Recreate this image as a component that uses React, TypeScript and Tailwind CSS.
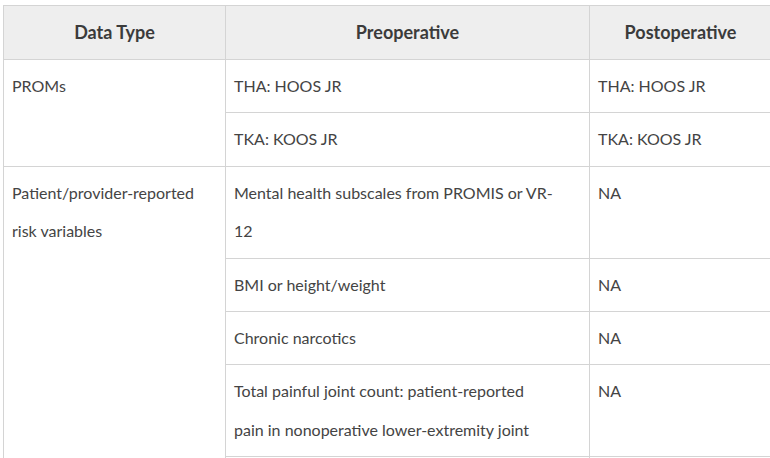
import * as React from "react";

type Row = { type?: React.ReactNode; span?: number; pre: React.ReactNode; post: string };

const rows: Row[] = [
  { type: "PROMs", span: 2, pre: "THA: HOOS JR", post: "THA: HOOS JR" },
  { pre: "TKA: KOOS JR", post: "TKA: KOOS JR" },
  {
    type: (
      <>
        Patient/provider-reported
        <br />
        risk variables
      </>
    ),
    span: 5,
    pre: (
      <>
        Mental health subscales from PROMIS or VR-
        <br />
        12
      </>
    ),
    post: "NA",
  },
  { pre: "BMI or height/weight", post: "NA" },
  { pre: "Chronic narcotics", post: "NA" },
  {
    pre: (
      <>
        Total painful joint count: patient-reported
        <br />
        pain in nonoperative lower-extremity joint
      </>
    ),
    post: "NA",
  },
  // next row starts right at the bottom edge of the view
  { pre: "\u00a0", post: "\u00a0" },
];

const cell = "border border-[#d4d4d4] px-2 py-[7px] align-top text-left font-normal";
const head = "border border-[#d4d4d4] px-2 py-[7px] text-center text-[18px] leading-[39px] font-bold text-[#3b3b3b]";

export default function App() {
  return (
    <div
      className="h-[458px] w-[770px] overflow-hidden bg-white pl-[3px] pt-[5px] text-[16px] leading-[2.4] text-[#444]"
      style={{ fontFamily: "Lato, 'Open Sans', sans-serif" }}
    >
      <table className="w-[769px] table-fixed border-collapse">
        <colgroup>
          <col className="w-[222px]" />
          <col className="w-[364px]" />
          <col />
        </colgroup>
        <thead>
          <tr className="bg-[#eeeeee]">
            <th className={head}>Data Type</th>
            <th className={head}>Preoperative</th>
            <th className={head}>Postoperative</th>
          </tr>
        </thead>
        <tbody>
          {rows.map((r, i) => (
            <tr key={i}>
              {r.type !== undefined && (
                <td rowSpan={r.span} className={cell}>
                  {r.type}
                </td>
              )}
              <td className={cell}>{r.pre}</td>
              <td className={cell}>{r.post}</td>
            </tr>
          ))}
        </tbody>
      </table>
    </div>
  );
}
